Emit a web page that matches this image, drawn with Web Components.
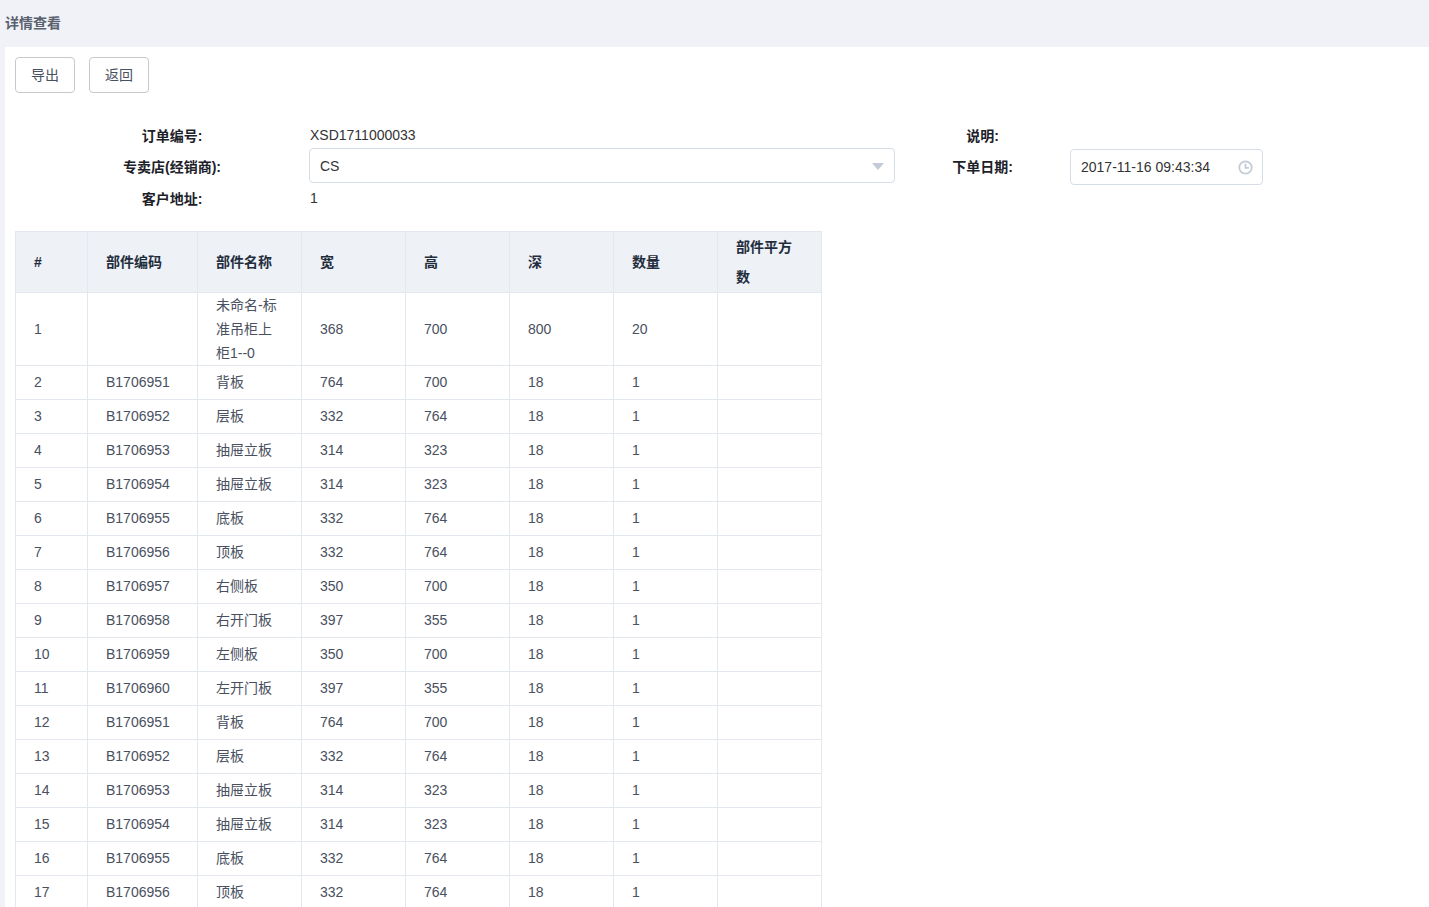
<!DOCTYPE html>
<html lang="zh">
<head>
<meta charset="utf-8">
<title>详情查看</title>
<style>
  html, body { margin: 0; height: 907px; overflow: hidden; background: #f0f2f7; }
  body { font: 14px/1.5 "Liberation Sans", "Noto Sans CJK SC", sans-serif; color: #495060; }
</style>
</head>
<body>
<detail-page heading="详情查看">
  <tool-button slot="actions">导出</tool-button>
  <tool-button slot="actions">返回</tool-button>
  <order-form slot="form"></order-form>
  <parts-table slot="table"></parts-table>
</detail-page>

<script>
class DetailPage extends HTMLElement {
  connectedCallback() {
    this.attachShadow({ mode: 'open' });
    this.shadowRoot.innerHTML = `
      <style>
        :host { display: block; }
        header {
          height: 47px;
          line-height: 46px;
          padding-left: 5px;
          font-size: 14px;
          font-weight: bold;
          color: #5a6270;
        }
        main {
          margin-left: 5px;
          background: #fff;
          padding: 10px 10px 0;
          height: 850px;
          overflow: hidden;
        }
        .actions { display: flex; gap: 14px; }
        .form { padding-top: 31px; }
        .table { padding-top: 17px; }
      </style>
      <header>${this.getAttribute('heading')}</header>
      <main>
        <div class="actions"><slot name="actions"></slot></div>
        <div class="form"><slot name="form"></slot></div>
        <div class="table"><slot name="table"></slot></div>
      </main>
    `;
  }
}
customElements.define('detail-page', DetailPage);

class ToolButton extends HTMLElement {
  connectedCallback() {
    this.attachShadow({ mode: 'open' });
    this.shadowRoot.innerHTML = `
      <style>
        :host {
          display: flex;
          align-items: center;
          justify-content: center;
          box-sizing: border-box;
          width: 60px;
          height: 36px;
          background: #fff;
          border: 1px solid #c7c9cc;
          border-radius: 4px;
          color: #495060;
        }
      </style>
      <slot></slot>
    `;
  }
}
customElements.define('tool-button', ToolButton);

class OrderForm extends HTMLElement {
  connectedCallback() {
    this.attachShadow({ mode: 'open' });
    this.shadowRoot.innerHTML = `
      <style>
        :host {
          display: grid;
          grid-template-columns: 294px 586px 175px 193px;
          grid-template-rows: 25px 36px 29px;
          align-items: center;
          color: #333;
        }
        .label {
          font-weight: bold;
          color: #1c2129;
          text-align: center;
        }
        .left { padding-left: 20px; }
        .value { padding: 0 0 2px 1px; }
        .box {
          box-sizing: border-box;
          height: 36px;
          display: flex;
          align-items: center;
          justify-content: space-between;
          padding: 0 9px 0 10px;
          background: #fff;
          border: 1px solid #d7dde4;
          border-radius: 4px;
        }
        .select { height: 35px; margin-top: -1px; align-self: start; padding: 1px 10px 0; }
        .arrow {
          width: 0;
          height: 0;
          border: 6px solid transparent;
          border-top: 7px solid #c3cbd6;
          border-bottom: 0;
        }
        svg { display: block; }
      </style>
      <div class="label left">订单编号:</div>
      <div class="value">XSD1711000033</div>
      <div class="label">说明:</div>
      <div></div>

      <div class="label left">专卖店(经销商):</div>
      <div class="box select"><span>CS</span><i class="arrow"></i></div>
      <div class="label">下单日期:</div>
      <div class="box">
        <span>2017-11-16 09:43:34</span>
        <svg width="15" height="15" viewBox="0 0 15 15" fill="none" stroke="#c3cbd6" stroke-width="1.8">
          <circle cx="7.5" cy="7.5" r="6.2"/>
          <path d="M7.5 3.8V7.9H11"/>
        </svg>
      </div>

      <div class="label left">客户地址:</div>
      <div class="value">1</div>
      <div></div>
      <div></div>
    `;
  }
}
customElements.define('order-form', OrderForm);

const PARTS = [
  ['1', '', '未命名-标准吊柜上柜1--0', '368', '700', '800', '20'],
  ['2', 'B1706951', '背板', '764', '700', '18', '1'],
  ['3', 'B1706952', '层板', '332', '764', '18', '1'],
  ['4', 'B1706953', '抽屉立板', '314', '323', '18', '1'],
  ['5', 'B1706954', '抽屉立板', '314', '323', '18', '1'],
  ['6', 'B1706955', '底板', '332', '764', '18', '1'],
  ['7', 'B1706956', '顶板', '332', '764', '18', '1'],
  ['8', 'B1706957', '右侧板', '350', '700', '18', '1'],
  ['9', 'B1706958', '右开门板', '397', '355', '18', '1'],
  ['10', 'B1706959', '左侧板', '350', '700', '18', '1'],
  ['11', 'B1706960', '左开门板', '397', '355', '18', '1'],
  ['12', 'B1706951', '背板', '764', '700', '18', '1'],
  ['13', 'B1706952', '层板', '332', '764', '18', '1'],
  ['14', 'B1706953', '抽屉立板', '314', '323', '18', '1'],
  ['15', 'B1706954', '抽屉立板', '314', '323', '18', '1'],
  ['16', 'B1706955', '底板', '332', '764', '18', '1'],
  ['17', 'B1706956', '顶板', '332', '764', '18', '1']
];

class PartsTable extends HTMLElement {
  connectedCallback() {
    this.attachShadow({ mode: 'open' });
    const heads = ['#', '部件编码', '部件名称', '宽', '高', '深', '数量', '部件平方数'];
    const rows = PARTS.map(r => `<tr>${r.map(c => `<td>${c}</td>`).join('')}<td></td></tr>`).join('');
    this.shadowRoot.innerHTML = `
      <style>
        :host { display: block; }
        table {
          table-layout: fixed;
          width: 806px;
          border-collapse: collapse;
          line-height: 24px;
          color: #495060;
        }
        th, td {
          box-sizing: border-box;
          border: 1px solid #e3e8ee;
          padding: 0 18px;
          text-align: left;
          height: 34px;
        }
        tbody tr:not(:first-child) td { padding-bottom: 2px; }
        th {
          height: 61px;
          background: #eef1f6;
          font-weight: bold;
          color: #1f2d3d;
          line-height: 30px;
        }
      </style>
      <table>
        <colgroup>
          <col style="width:72px"><col style="width:110px"><col style="width:104px"><col style="width:104px">
          <col style="width:104px"><col style="width:104px"><col style="width:104px"><col style="width:104px">
        </colgroup>
        <thead><tr>${heads.map(h => `<th>${h}</th>`).join('')}</tr></thead>
        <tbody>${rows}</tbody>
      </table>
    `;
  }
}
customElements.define('parts-table', PartsTable);
</script>
</body>
</html>
